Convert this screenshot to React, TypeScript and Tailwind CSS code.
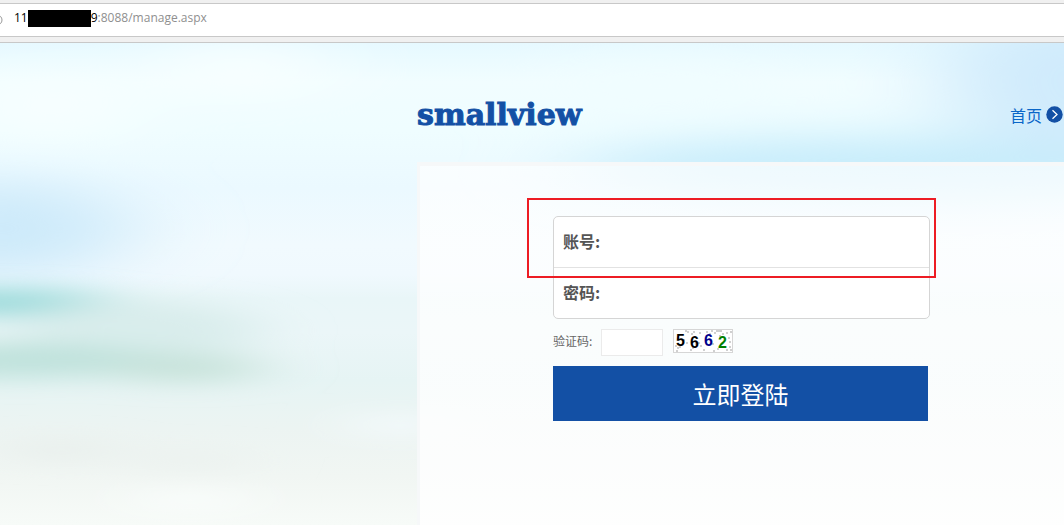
function SeaBackdrop() {
  return (
    <svg
      aria-hidden="true"
      className="absolute inset-0 h-full w-full"
      viewBox="0 42 1064 483"
      preserveAspectRatio="none"
    >
      <defs>
        <linearGradient id="sea" x1="0" y1="0" x2="0" y2="1">
          <stop offset="0" stopColor="#e6f9ff" />
          <stop offset="0.08" stopColor="#f1fdff" />
          <stop offset="0.18" stopColor="#effdff" />
          <stop offset="0.3" stopColor="#ebf9ff" />
          <stop offset="0.42" stopColor="#f1fafe" />
          <stop offset="0.48" stopColor="#f0f9fe" />
          <stop offset="0.53" stopColor="#e9f6f8" />
          <stop offset="0.6" stopColor="#ebf6f8" />
          <stop offset="0.7" stopColor="#e6f4f4" />
          <stop offset="0.8" stopColor="#ecf4f2" />
          <stop offset="0.9" stopColor="#f1f6f3" />
          <stop offset="1" stopColor="#f7fbf8" />
        </linearGradient>
        <filter id="soft" x="-100%" y="-150%" width="300%" height="400%">
          <feGaussianBlur stdDeviation="34 11" />
        </filter>
        <filter id="softer" x="-50%" y="-50%" width="200%" height="200%">
          <feGaussianBlur stdDeviation="52 20" />
        </filter>
      </defs>
      <rect x="0" y="42" width="1064" height="483" fill="url(#sea)" />
      <g filter="url(#softer)">
        <ellipse cx="50" cy="105" rx="80" ry="34" fill="#f8ffff" />
        <ellipse cx="240" cy="68" rx="90" ry="26" fill="#f9ffff" />
        <ellipse cx="0" cy="228" rx="130" ry="48" fill="#cdeafa" />
        <ellipse cx="900" cy="168" rx="330" ry="32" fill="#c6ecfb" />
        <ellipse cx="1070" cy="80" rx="130" ry="70" fill="#d0ebfc" />
        <ellipse cx="660" cy="85" rx="120" ry="26" fill="#f0fdff" />
      </g>
      <g filter="url(#soft)">
        <ellipse cx="0" cy="302" rx="120" ry="13" fill="#96d9d9" />
        <ellipse cx="140" cy="330" rx="120" ry="30" fill="#d9edec" />
        <ellipse cx="20" cy="360" rx="140" ry="18" fill="#bfe2dc" />
        <ellipse cx="185" cy="368" rx="80" ry="14" fill="#c6e2d9" />
        <ellipse cx="60" cy="450" rx="60" ry="10" fill="#e8eeeb" />
        <ellipse cx="190" cy="460" rx="60" ry="10" fill="#ebf1ee" />
        <ellipse cx="190" cy="500" rx="60" ry="8" fill="#fcfffe" />
        <ellipse cx="400" cy="425" rx="50" ry="9" fill="#f6fcff" />
      </g>
    </svg>
  );
}

const SPECKS = [
  [2, 16], [4, 18], [3, 21], [6, 17], [12, 1], [14, 2], [18, 4], [20, 2], [17, 20], [19, 18],
  [13, 13], [22, 14], [26, 3], [25, 13], [27, 16], [33, 2], [36, 4], [38, 1], [39, 14], [41, 3],
  [43, 1], [45, 1], [47, 1], [49, 4], [53, 3], [55, 8], [56, 12], [57, 2], [44, 19], [53, 20],
  [56, 17], [40, 21], [30, 20], [10, 10], [57, 20], [46, 6],
];

function CaptchaImage() {
  return (
    <svg
      role="img"
      aria-label="5662"
      viewBox="0 0 60 24"
      className="ml-2.5 h-6 w-15 font-['Liberation_Sans',sans-serif] text-[16px] font-bold"
    >
      <rect x="0.5" y="0.5" width="59" height="23" fill="#fff" stroke="#d6d6d6" />
      {SPECKS.map(([x, y]) => (
        <rect key={`${x}-${y}`} x={x} y={y} width="2" height="2" fill="#d0d0d0" />
      ))}
      <text x="3" y="17" fill="#000">5</text>
      <text x="17" y="19" fill="#000">6</text>
      <text x="31" y="17" fill="#00008b">6</text>
      <text x="45" y="19" fill="#008000">2</text>
    </svg>
  );
}

function AddressBar() {
  return (
    <header className="border-b border-[#c8c8c8] bg-[#f0f0f0] pt-[3px] pb-[5px]">
      <div className="flex h-[34px] items-center border-y border-[#c8c8c8] bg-white pb-1 font-['Open_Sans','Noto_Sans',sans-serif] text-[12px] leading-4 text-[#8f8f8f]">
        <svg aria-hidden="true" viewBox="0 0 3 12" className="mt-1 mr-[11px] h-3 w-[3px]">
          <circle cx="-3" cy="6" r="5" fill="none" stroke="#999" />
        </svg>
        <span className="text-black">11</span>
        <span className="h-[17px] w-[63px] bg-black" />
        <span className="text-black">9</span>
        <span>:8088/manage.aspx</span>
      </div>
    </header>
  );
}

function Field({ id, label, type }: { id: string; label: string; type: string }) {
  return (
    <div className="box-content flex h-[50px] items-center px-[9px]">
      <label htmlFor={id} className="pb-0.5 text-[16px] leading-6 font-bold text-[#555]">
        {label}
      </label>
      <input id={id} type={type} className="ml-2 h-8 min-w-0 flex-1 bg-transparent outline-none" />
    </div>
  );
}

function LoginForm() {
  return (
    <form className="w-[377px]" onSubmit={(e) => e.preventDefault()}>
      <div className="relative">
        <div className="divide-y divide-[#e2e2e2] rounded-[5px] border border-[#d5d5d5] bg-white">
          <Field id="account" label="账号:" type="text" />
          <Field id="password" label="密码:" type="password" />
        </div>
        <div className="pointer-events-none absolute -top-[18px] -right-[6px] -left-[26px] h-20 border-2 border-[#ed1c24]" />
      </div>
      <div className="mt-2.5 flex items-start">
        <label htmlFor="code" className="w-12 text-[12px] leading-6 text-[#666]">
          验证码:
        </label>
        <input id="code" type="text" className="h-[27px] w-[62px] border border-[#ebebeb] bg-white px-1 text-[12px]" />
        <CaptchaImage />
      </div>
      <button type="submit" className="mt-2.5 mr-0.5 block h-[55px] w-[375px] bg-[#1350a5] text-[24px] text-white">
        立即登陆
      </button>
    </form>
  );
}

export default function App() {
  return (
    <div className="flex min-h-screen flex-col overflow-x-hidden font-['Noto_Sans_CJK_SC',sans-serif]">
      <AddressBar />
      <main className="relative flex flex-1 flex-col">
        <SeaBackdrop />
        <div className="relative flex flex-1 flex-col pl-[417px]">
          <div className="flex h-[119px] items-center justify-between pt-6">
            <h1 className="font-['DejaVu_Serif',serif] text-[30px] leading-8 font-bold text-[#1350a5] [-webkit-text-stroke:1px_#1350a5]">
              smallview
            </h1>
            <a href="#home" className="flex items-center gap-1 pr-px text-[16px] leading-6 text-[#0a66c8]">
              首页
              <svg aria-hidden="true" viewBox="0 0 17 17" className="size-[17px]">
                <circle cx="8.5" cy="8.5" r="8.2" fill="#1350a5" />
                <path d="M6.5 4.2 11 8.5 6.5 12.8" fill="none" stroke="#fff" strokeWidth="1.3" />
              </svg>
            </a>
          </div>
          <section className="flex-1 border-t-4 border-l-3 border-[#f6f8f9] bg-linear-to-b from-white/70 to-white/85 pt-[50px] pb-8 pl-[133px]">
            <LoginForm />
          </section>
        </div>
      </main>
    </div>
  );
}
